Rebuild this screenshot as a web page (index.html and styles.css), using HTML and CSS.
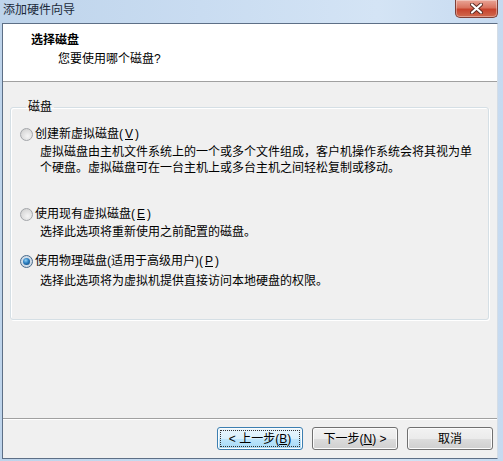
FILE: index.html
```html
<!DOCTYPE html>
<html lang="zh-CN">
<head>
  <meta charset="UTF-8">
  <title>添加硬件向导</title>
  <link rel="stylesheet" href="styles.css">
</head>
<body>
  <div class="window">
    <div class="titlebar">
      <span class="title">添加硬件向导</span>
      <button class="close" aria-label="关闭">
        <svg width="13" height="11" viewBox="0 0 13 11">
          <path d="M2 1.5 L11 9.5 M11 1.5 L2 9.5" stroke="#5a2a22" stroke-width="4" stroke-linecap="round"/>
          <path d="M2 1.5 L11 9.5 M11 1.5 L2 9.5" stroke="#fff" stroke-width="2.2" stroke-linecap="round"/>
        </svg>
      </button>
    </div>

    <div class="client">
      <div class="header">
        <h1>选择磁盘</h1>
        <p>您要使用哪个磁盘?</p>
      </div>

      <div class="content">
        <fieldset class="group">
          <legend>磁盘</legend>

          <div class="option first">
            <label class="radio-row"><span class="radio"></span>创建新虚拟磁盘(<u>V</u>)</label>
            <p class="desc">虚拟磁盘由主机文件系统上的一个或多个文件组成，客户机操作系统会将其视为单<br>个硬盘。虚拟磁盘可在一台主机上或多台主机之间轻松复制或移动。</p>
          </div>

          <div class="option second">
            <label class="radio-row"><span class="radio"></span>使用现有虚拟磁盘(<u>E</u>)</label>
            <p class="desc">选择此选项将重新使用之前配置的磁盘。</p>
          </div>

          <div class="option third">
            <label class="radio-row"><span class="radio checked"></span>使用物理磁盘(适用于高级用户)(<u>P</u>)</label>
            <p class="desc">选择此选项将为虚拟机提供直接访问本地硬盘的权限。</p>
          </div>
        </fieldset>
      </div>

      <div class="footer">
        <button class="btn default"><span class="focus">&lt; 上一步(<u>B</u>)</span></button>
        <button class="btn">下一步(<u>N</u>) &gt;</button>
        <button class="btn">取消</button>
      </div>
    </div>
  </div>
</body>
</html>
```

FILE: styles.css
```css
* {
  box-sizing: border-box;
  margin: 0;
  padding: 0;
}

body {
  width: 503px;
  height: 461px;
  overflow: hidden;
  background: #c3d8ef;
  font-family: "Liberation Sans", "Noto Sans CJK SC", sans-serif;
  font-size: 12px;
  line-height: 16px;
  color: #000;
}

.window {
  height: 461px;
  display: flex;
  flex-direction: column;
  background: linear-gradient(90deg, #bed4eb 0%, #c9dcf1 40%, #d4e4f5 75%, #c6daf0 100%);
}

.titlebar {
  height: 23px;
  display: flex;
  align-items: flex-start;
  justify-content: space-between;
  padding: 0 5px 0 3px;
}

.title {
  margin-top: 2px;
  color: #1b2a3a;
}

.close {
  width: 43px;
  height: 18px;
  border: 1px solid #7d3f37;
  border-top: none;
  border-radius: 0 0 5px 5px;
  background: linear-gradient(#e9a597 0%, #d9735f 45%, #c7432d 55%, #d06a4f 100%);
  box-shadow: inset 0 0 0 1px rgba(255, 255, 255, 0.35);
  display: flex;
  align-items: center;
  justify-content: center;
}

.client {
  height: 436px;
  margin: 0 5px 0 2px;
  border: 1px solid #5d6f86;
  border-right-color: #d4dde6;
  background: #f0f0f0;
  display: flex;
  flex-direction: column;
}

.header {
  height: 58px;
  background: #fff;
  border-bottom: 1px solid #a0a0a0;
  padding: 8px 0 0 28px;
}

.header h1 {
  font-size: 12px;
  font-weight: bold;
  line-height: 16px;
}

.header p {
  margin: 3px 0 0 27px;
}

.content {
  flex: 1;
  padding: 17px 8px 0 7px;
}

.group {
  border: 1px solid #d5dfe5;
  border-radius: 3px;
  box-shadow: 1px 1px 0 #fff, inset 1px 1px 0 #fff;
  padding: 0 8px 30px 9px;
}

.group legend {
  margin-left: 6px;
  padding: 0 2px;
}

.option.first { margin-top: 11px; }
.option.second { margin-top: 30px; }
.option.third { margin-top: 13px; }

.radio-row {
  display: flex;
  align-items: center;
  gap: 2px;
}

.radio {
  width: 13px;
  height: 13px;
  border-radius: 50%;
  border: 1px solid #a3a6aa;
  background: radial-gradient(circle at 60% 65%, #f4f4f4 0%, #dcdcdc 60%, #c8c8c8 100%);
  position: relative;
}

.radio.checked {
  border-color: #4a6a8a;
  background: radial-gradient(circle at 50% 50%, #dfe9f2 0%, #c5d3e0 100%);
}

.radio.checked::after {
  content: "";
  position: absolute;
  left: 2px;
  top: 2px;
  width: 7px;
  height: 7px;
  border-radius: 50%;
  background: radial-gradient(circle at 40% 35%, #8fd0f5 0%, #2a7dbf 45%, #0e3f70 100%);
}

.desc {
  padding-left: 20px;
  margin-top: 2px;
}

.option.third .desc { margin-top: 4px; }

.footer {
  height: 40px;
  border-top: 1px solid #a0a0a0;
  box-shadow: inset 0 1px 0 #fff;
  display: flex;
  justify-content: flex-end;
  align-items: flex-start;
  gap: 9px;
  padding: 8px 4px 0 0;
}

.btn {
  width: 86px;
  height: 23px;
  border: 1px solid #707070;
  border-radius: 3px;
  background: linear-gradient(#f2f2f2 0%, #ebebeb 50%, #dddddd 50%, #cfcfcf 100%);
  box-shadow: inset 0 0 0 1px #fcfcfc;
  font-family: inherit;
  font-size: 12px;
  line-height: 16px;
  color: #000;
  display: flex;
  align-items: center;
  justify-content: center;
}

.btn.default {
  border-color: #3c7fb1;
  background: linear-gradient(#eaf6fd 0%, #d9f0fc 50%, #bee6fd 50%, #a7d9f5 100%);
  padding: 2px;
}

.btn .focus {
  width: 100%;
  height: 100%;
  border: 1px dotted #333;
  display: flex;
  align-items: center;
  justify-content: center;
}
```
